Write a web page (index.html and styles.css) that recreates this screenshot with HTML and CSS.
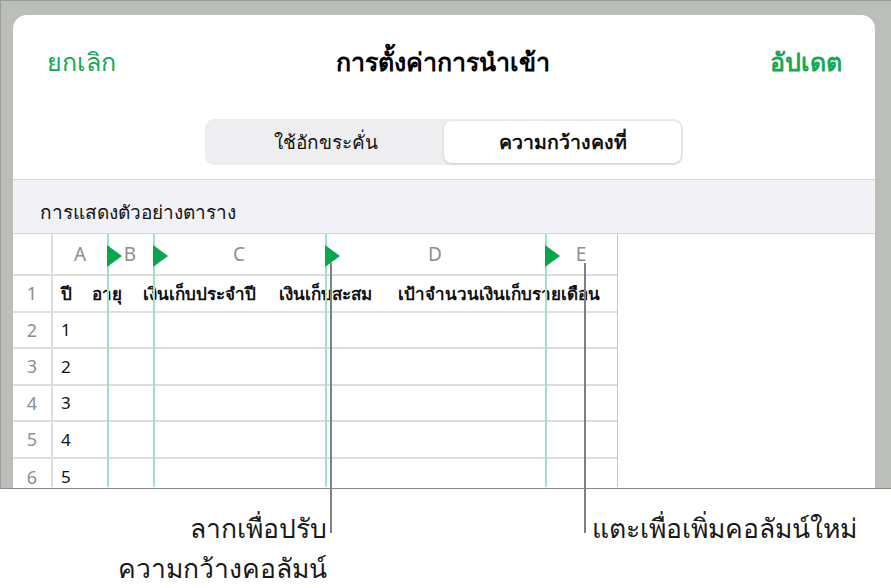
FILE: index.html
```html
<!DOCTYPE html>
<html lang="th">
<head>
    <meta charset="UTF-8">
    <meta name="viewport" content="width=device-width, initial-scale=1.0">
    <title>การตั้งค่าการนำเข้า</title>
    <link rel="stylesheet" href="styles.css">
</head>
<body>

<div class="frame">
    <div class="panel">
        <div class="nav">
            <span class="nav-btn">ยกเลิก</span>
            <span class="nav-title">การตั้งค่าการนำเข้า</span>
            <span class="nav-btn strong">อัปเดต</span>
        </div>

        <div class="seg-wrap">
            <div class="seg">
                <div class="seg-item">ใช้อักขระคั่น</div>
                <div class="seg-item active">ความกว้างคงที่</div>
            </div>
        </div>

        <div class="section">การแสดงตัวอย่างตาราง</div>

        <div class="sheet">
            <div class="row head">
                <div class="rh"></div>
                <div class="cols">
                    <span class="col-letter" style="width:54px">A</span>
                    <span class="col-letter" style="width:46px">B</span>
                    <span class="col-letter" style="width:172px">C</span>
                    <span class="col-letter" style="width:220px">D</span>
                    <span class="col-letter" style="width:72px">E</span>
                </div>
            </div>
            <div class="row">
                <div class="rh">1</div>
                <div class="cells bold">
                    <span style="width:31px">ปี</span>
                    <span style="width:51px">อายุ</span>
                    <span style="width:136px">เงินเก็บประจำปี</span>
                    <span style="width:119px">เงินเก็บสะสม</span>
                    <span>เป้าจำนวนเงินเก็บรายเดือน</span>
                </div>
            </div>
            <div class="row"><div class="rh">2</div><div class="cells">1</div></div>
            <div class="row"><div class="rh">3</div><div class="cells">2</div></div>
            <div class="row"><div class="rh">4</div><div class="cells">3</div></div>
            <div class="row"><div class="rh">5</div><div class="cells">4</div></div>
            <div class="row last"><div class="rh">6</div><div class="cells">5</div></div>

            <!-- column breaks -->
            <div class="brk" style="left:94px"><span class="flag"></span></div>
            <div class="brk" style="left:140px"><span class="flag"></span></div>
            <div class="brk" style="left:312px"><span class="flag"></span></div>
            <div class="brk" style="left:532px"><span class="flag"></span></div>
        </div>
    </div>
</div>

<div class="callouts">
    <div class="callout-left">ลากเพื่อปรับ<br>ความกว้างคอลัมน์</div>
    <div class="callout-right">แตะเพื่อเพิ่มคอลัมน์ใหม่</div>
</div>

<span class="leader" style="left:330px"></span>
<span class="leader" style="left:584px"></span>

</body>
</html>
```

FILE: styles.css
```css
body {
    margin: 0;
    background: #fff;
    font-family: "Noto Sans", "DejaVu Sans", sans-serif;
    color: #111;
}
.frame {
    height: 473px;
    padding: 14px 16px 0 12px;
    background: #bcbeba;
    border-top: 1px solid #9a9c98;
    border-left: 1px solid #9a9c98;
    border-bottom: 1px solid #8a8a8a;
    overflow: hidden;
}
.panel {
    height: 473px;
    background: #fff;
    border-radius: 14px 14px 0 0;
    overflow: hidden;
}
.nav {
    height: 94px;
    padding: 0 33px 0 34px;
    display: flex;
    align-items: center;
    justify-content: space-between;
    font-size: 25px;
}
.nav-btn {
    color: #17a854;
}
.nav-btn.strong {
    font-weight: 600;
}
.nav-title {
    font-weight: 700;
    color: #000;
}
.seg-wrap {
    height: 70px;
    display: flex;
    justify-content: center;
}
.seg {
    margin-top: 10px;
    width: 474px;
    height: 42px;
    padding: 2px;
    display: flex;
    background: #eeeef0;
    border-radius: 9px;
}
.seg-item {
    flex: 1;
    display: flex;
    align-items: center;
    justify-content: center;
    font-size: 19px;
    color: #111;
    border-radius: 8px;
}
.seg-item.active {
    background: #fff;
    font-size: 19.5px;
    font-weight: 700;
    box-shadow: 0 1px 3px rgba(0, 0, 0, 0.15);
}
.section {
    height: 55px;
    padding-left: 27px;
    display: flex;
    align-items: flex-end;
    box-sizing: border-box;
    line-height: 42px;
    font-size: 19px;
    background: #f1f1f6;
    border-top: 1px solid #d6d6da;
    border-bottom: 1px solid #d6d6da;
}
.sheet {
    position: relative;
    width: 604px;
    border-right: 1px solid #c6c6c6;
    height: 253px;
    overflow: hidden;
}
.row {
    display: flex;
    height: 36.5px;
    border-bottom: 2px solid #dedede;
    box-sizing: border-box;
}
.row.head {
    height: 42px;
}
.row.last {
    border-bottom: none;
}
.rh {
    width: 40px;
    flex: none;
    border-right: 2px solid #dedede;
    box-sizing: border-box;
    display: flex;
    align-items: center;
    justify-content: center;
    font-size: 18px;
    color: #8e8e8e;
}
.cols {
    display: flex;
    align-items: center;
}
.col-letter {
    text-align: center;
    font-size: 19px;
    color: #8e8e8e;
}
.cells {
    display: flex;
    align-items: center;
    padding-left: 8px;
    font-size: 17px;
    white-space: nowrap;
}
.cells.bold {
    font-weight: 700;
}
.cells span {
    flex: none;
}
.brk {
    position: absolute;
    top: 0;
    bottom: 0;
    width: 2px;
    background: #a3dfc0;
}
.flag {
    position: absolute;
    top: 11px;
    left: 0;
    width: 0;
    height: 0;
    border-top: 11px solid transparent;
    border-bottom: 11px solid transparent;
    border-left: 15px solid #0aa64d;
}
.callouts {
    display: flex;
    padding-top: 19px;
    font-size: 26.5px;
    line-height: 40px;
    color: #1a1a1a;
}
.callout-left {
    width: 327px;
    text-align: right;
}
.callout-right {
    margin-left: 265px;
}
.leader {
    position: absolute;
    top: 263px;
    width: 2px;
    height: 270px;
    background: #808080;
}
```
